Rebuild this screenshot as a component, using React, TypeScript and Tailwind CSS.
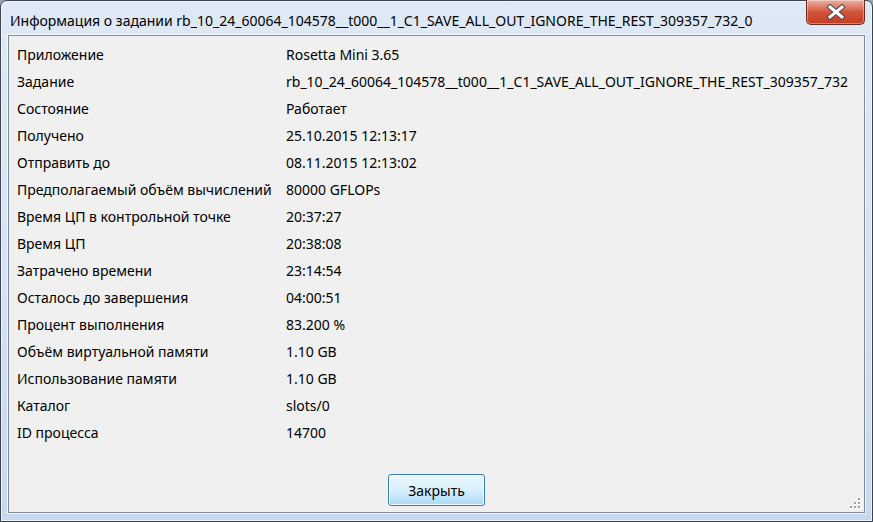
const title = "Информация о задании rb_10_24_60064_104578__t000__1_C1_SAVE_ALL_OUT_IGNORE_THE_REST_309357_732_0";

const rows: [string, string][] = [
  ["Приложение", "Rosetta Mini 3.65"],
  ["Задание", "rb_10_24_60064_104578__t000__1_C1_SAVE_ALL_OUT_IGNORE_THE_REST_309357_732"],
  ["Состояние", "Работает"],
  ["Получено", "25.10.2015 12:13:17"],
  ["Отправить до", "08.11.2015 12:13:02"],
  ["Предполагаемый объём вычислений", "80000 GFLOPs"],
  ["Время ЦП в контрольной точке", "20:37:27"],
  ["Время ЦП", "20:38:08"],
  ["Затрачено времени", "23:14:54"],
  ["Осталось до завершения", "04:00:51"],
  ["Процент выполнения", "83.200 %"],
  ["Объём виртуальной памяти", "1.10 GB"],
  ["Использование памяти", "1.10 GB"],
  ["Каталог", "slots/0"],
  ["ID процесса", "14700"],
];

function CloseButton() {
  return (
    <div className="w-[59px] h-[25px] mt-[-1px] rounded-b-[5px] border border-[#6a2b20] border-t-0 bg-gradient-to-b from-[#eab3a6] via-[#d2533b] to-[#c33d22] shadow-[inset_0_0_0_1px_rgba(255,255,255,0.35)] flex items-center justify-center">
      <svg width="20" height="16" viewBox="0 0 20 16">
        <path
          d="M4 3 L16 13 M16 3 L4 13"
          stroke="#4a4a4a"
          strokeWidth="5"
          strokeLinecap="square"
          fill="none"
        />
        <path
          d="M4 3 L16 13 M16 3 L4 13"
          stroke="#ffffff"
          strokeWidth="3"
          strokeLinecap="square"
          fill="none"
        />
      </svg>
    </div>
  );
}

function Grip() {
  const dots = [
    [8, 0],
    [4, 4],
    [8, 4],
    [0, 8],
    [4, 8],
    [8, 8],
  ];
  return (
    <svg width="12" height="12" viewBox="0 0 12 12" className="absolute right-[2px] bottom-[2px]">
      {dots.map(([x, y], i) => (
        <g key={i}>
          <rect x={x + 1} y={y + 1} width="2" height="2" fill="#ffffff" />
          <rect x={x} y={y} width="2" height="2" fill="#a0a0a0" />
        </g>
      ))}
    </svg>
  );
}

export default function App() {
  return (
    <div
      className="w-[873px] h-[522px] bg-[#9aa3ad] overflow-hidden"
      style={{ fontFamily: '"Noto Sans", "Open Sans", sans-serif' }}
    >
      <div className="w-full h-full flex flex-col rounded-t-[7px] border border-[#3d4450] bg-gradient-to-b from-[#dfe9f6] via-[#d6e3f2] to-[#c6d9ee] shadow-[inset_0_0_0_1px_rgba(255,255,255,0.6)]">
        <div className="h-[34px] flex items-start shrink-0">
          <div className="pl-[9px] pt-[10px] text-[14px] leading-[20px] text-black whitespace-nowrap flex-1 min-w-0">
            {title}
          </div>
          <div className="mr-[7px]">
            <CloseButton />
          </div>
        </div>
        <div className="flex-1 mx-[7px] mb-[8px] border border-[#7e8a99] shadow-[0_0_0_1px_rgba(255,255,255,0.7)] bg-[#f0f0f0] flex flex-col relative">
          <div className="pt-[5px] pl-[8px] flex flex-col">
            {rows.map(([label, value]) => (
              <div key={label} className="h-[27px] flex items-center text-[14px] text-black whitespace-nowrap">
                <div className="w-[269px] shrink-0">{label}</div>
                <div>{value}</div>
              </div>
            ))}
          </div>
          <div className="flex-1" />
          <div className="flex justify-center pb-[6px]">
            <button className="w-[97px] h-[32px] rounded-[3px] border border-[#3c7fb1] bg-gradient-to-b from-[#eaf6fd] via-[#d9f0fc] to-[#a7d9f5] shadow-[inset_0_0_0_1px_rgba(255,255,255,0.8)] text-[14px] text-black">
              Закрыть
            </button>
          </div>
          <Grip />
        </div>
      </div>
    </div>
  );
}
